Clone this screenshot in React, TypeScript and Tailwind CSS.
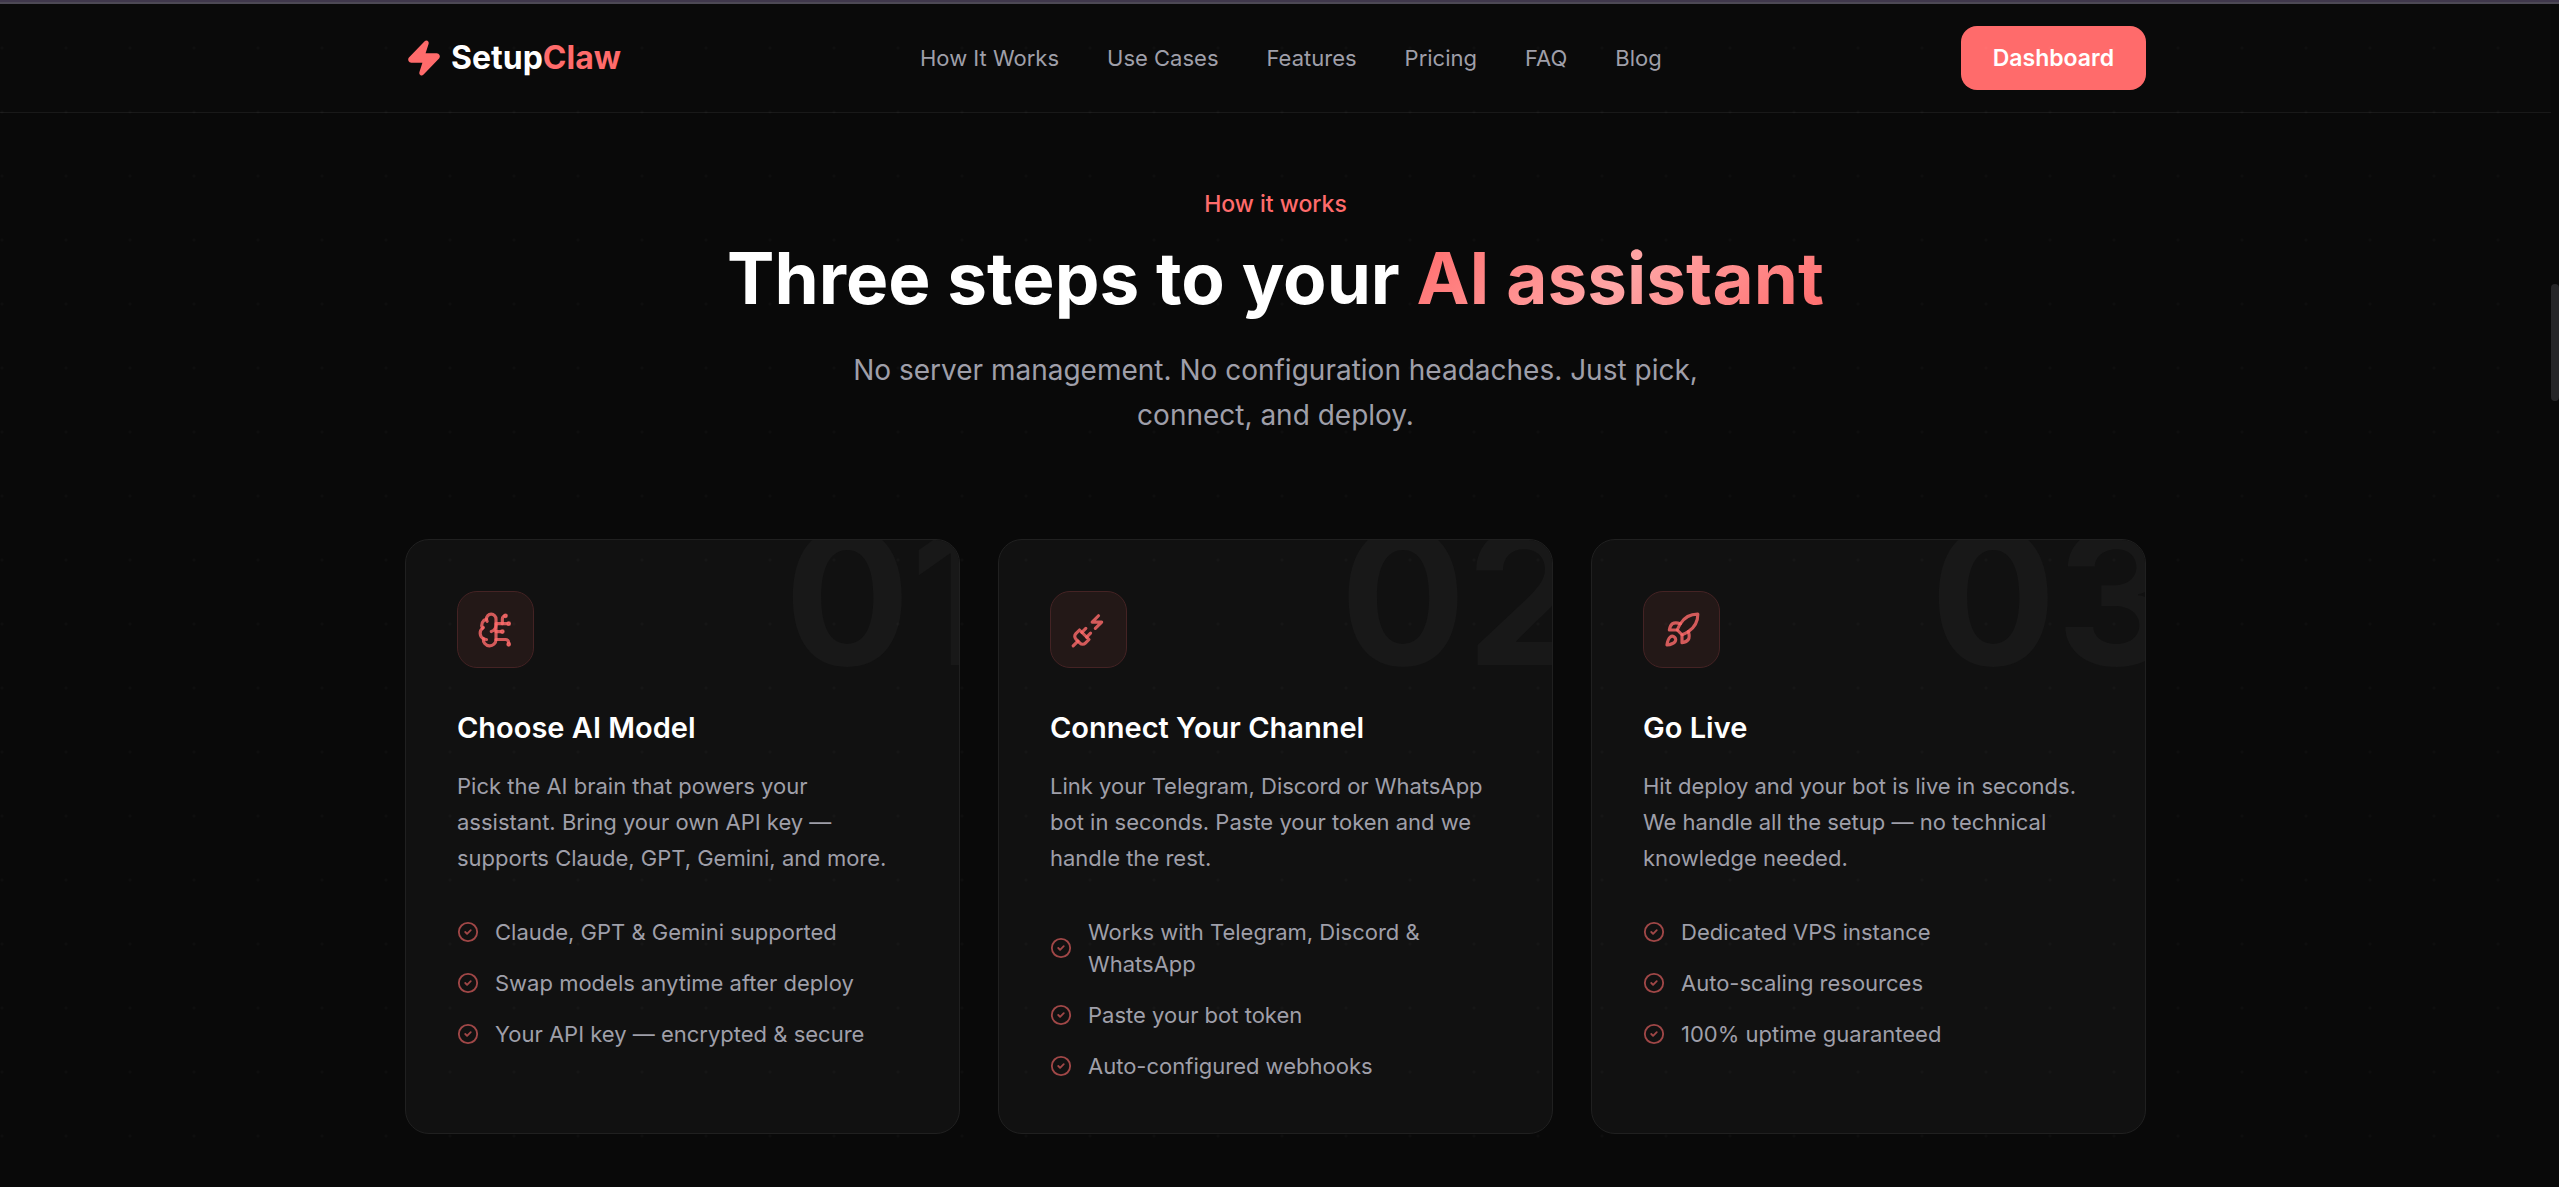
import React from 'react';
import { BrainCircuit, CircleCheck, PlugZap, Rocket, Zap, type LucideIcon } from 'lucide-react';

interface Step {
  number: string;
  icon: LucideIcon;
  title: string;
  description: string;
  features: string[];
}

const navLinks = [
  { label: 'How It Works', href: '#how-it-works' },
  { label: 'Use Cases', href: '#use-cases' },
  { label: 'Features', href: '#features' },
  { label: 'Pricing', href: '#pricing' },
  { label: 'FAQ', href: '#faq' },
  { label: 'Blog', href: '#blog' },
];

const steps: Step[] = [
  {
    number: '01',
    icon: BrainCircuit,
    title: 'Choose AI Model',
    description:
      'Pick the AI brain that powers your assistant. Bring your own API key — supports Claude, GPT, Gemini, and more.',
    features: [
      'Claude, GPT & Gemini supported',
      'Swap models anytime after deploy',
      'Your API key — encrypted & secure',
    ],
  },
  {
    number: '02',
    icon: PlugZap,
    title: 'Connect Your Channel',
    description:
      'Link your Telegram, Discord or WhatsApp bot in seconds. Paste your token and we handle the rest.',
    features: [
      'Works with Telegram, Discord & WhatsApp',
      'Paste your bot token',
      'Auto-configured webhooks',
    ],
  },
  {
    number: '03',
    icon: Rocket,
    title: 'Go Live',
    description:
      'Hit deploy and your bot is live in seconds. We handle all the setup — no technical knowledge needed.',
    features: [
      'Dedicated VPS instance',
      'Auto-scaling resources',
      '100% uptime guaranteed',
    ],
  },
];

const Header: React.FC = () => (
  <header className="border-b border-[#191919] bg-[#0a0a0a]">
    <div className="mx-auto flex max-w-[1741px] items-center justify-between py-[22px]">
      <a href="#" className="flex items-center gap-2 text-[32px] leading-10 font-bold">
        <Zap size={38} className="fill-[#ff6b6b] text-[#ff6b6b]" />
        <span>
          Setup<span className="text-[#ff6b6b]">Claw</span>
        </span>
      </a>
      <nav className="flex items-center gap-12">
        {navLinks.map((link) => (
          <a
            key={link.label}
            href={link.href}
            className="text-[22px] leading-8 text-zinc-400 transition-colors hover:text-white"
          >
            {link.label}
          </a>
        ))}
      </nav>
      <button
        type="button"
        className="rounded-2xl bg-[#ff6b6b] px-8 py-4 text-[23px] leading-8 font-semibold"
      >
        Dashboard
      </button>
    </div>
  </header>
);

const StepCard: React.FC<{ step: Step }> = ({ step }) => {
  const Icon = step.icon;

  return (
    <article className="relative overflow-hidden rounded-3xl border border-[#202020] bg-[#111111] p-[51px]">
      <span
        aria-hidden="true"
        className="absolute -top-9 -right-8 text-[187px] leading-none font-bold text-[#181818]"
      >
        {step.number}
      </span>

      <div className="relative mb-[42px] flex size-[77px] items-center justify-center rounded-[20px] border border-[#442324] bg-[#231817]">
        <Icon size={38} className="text-[#ff6b6b]/80" />
      </div>

      <h3 className="mb-[22px] text-[29px] leading-9 font-semibold">{step.title}</h3>
      <p className="mb-10 text-[22px] leading-9 text-zinc-400">{step.description}</p>

      <ul className="flex flex-col gap-[19px]">
        {step.features.map((feature) => (
          <li key={feature} className="flex items-center gap-4 text-[22px] leading-8 text-zinc-400">
            <CircleCheck size={22} className="shrink-0 text-[#ff6b6b] opacity-60" />
            <span>{feature}</span>
          </li>
        ))}
      </ul>
    </article>
  );
};

const HowItWorks: React.FC = () => (
  <section id="how-it-works" className="pt-[75px] pb-12">
    <div className="mx-auto max-w-[1741px]">
      <div className="mb-[101px] text-center">
        <p className="mb-[18px] text-[23px] leading-8 font-medium text-[#ff6b6b]">How it works</p>
        <h2 className="mb-[30px] text-[71px] leading-20 font-bold">
          Three steps to your{' '}
          <span className="bg-[linear-gradient(135deg,#ff6b6b,#ffa5a5_50%,#ff6b6b)] bg-clip-text text-transparent">
            AI assistant
          </span>
        </h2>
        <p className="mx-auto max-w-[900px] text-[28px] leading-[45px] text-zinc-400">
          No server management. No configuration headaches. Just pick, connect, and deploy.
        </p>
      </div>

      <div className="grid grid-cols-3 gap-[38px]">
        {steps.map((step) => (
          <StepCard key={step.number} step={step} />
        ))}
      </div>
    </div>
  </section>
);

const App: React.FC = () => {
  return (
    <div className="relative min-h-screen bg-[#090909] pr-2 font-[Inter,sans-serif] text-white">
      <div className="-mr-2 h-1 border-t-2 border-[#40384c] bg-[#4d4955]"></div>
      <Header />
      <HowItWorks />

      {/* Dot grid over the whole page */}
      <div className="pointer-events-none absolute inset-0 bg-[radial-gradient(circle_at_2px_2px,rgba(255,255,255,0.02)_1px,transparent_2px)] bg-size-[64px_64px] bg-position-[0_46px]"></div>

      {/* Scroll thumb */}
      <div className="absolute top-[284px] right-0 h-[117px] w-2 rounded-full bg-[#262628]"></div>
    </div>
  );
};

export default App;
